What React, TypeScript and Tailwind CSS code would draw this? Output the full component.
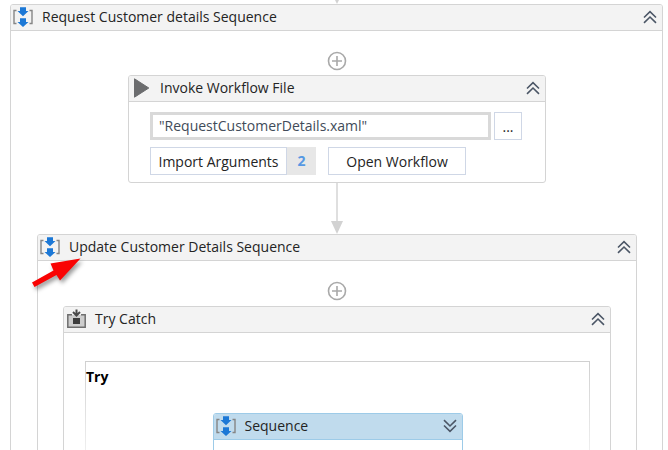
import { useState, type ReactNode } from "react";

function SequenceIcon() {
  return (
    <svg width="22" height="20" viewBox="0 0 22 20" fill="none" aria-hidden="true">
      <path d="M4.5 3.5H2v13h2.5M17.5 3.5H20v13h-2.5" stroke="#858585" strokeWidth="1.4" />
      <path d="M8 0.3h6v3.700h2.500L11 9.300 5.500 4H8z" fill="#1c78d6" />
      <path d="M8 11.200h6V15h2.500L11 20 5.500 15H8z" fill="#1c78d6" />
    </svg>
  );
}

function PlayIcon() {
  return (
    <svg width="22" height="20" viewBox="0 0 22 20" aria-hidden="true">
      <path d="M4.500 0.800L18.800 10 4.500 19.200z" fill="#6b6c6e" stroke="#6b6c6e" strokeLinejoin="round" />
    </svg>
  );
}

function TryCatchIcon() {
  return (
    <svg width="22" height="20" viewBox="0 0 22 20" fill="none" aria-hidden="true">
      <rect x="3" y="6" width="17" height="12" fill="#cdcdcd" />
      <path d="M6 0h11v5.500H6z" fill="#f3f3f3" />
      <path d="M7 5.700H2.800v12.500h17.400V5.700H16" stroke="#6e6e6e" strokeWidth="1.500" />
      <rect x="8" y="9" width="7" height="6" fill="#3c3c3c" />
      <path d="M11.500 0.500V6M8 3l3.500 3.500L15 3" stroke="#4a4a4a" strokeWidth="2" />
    </svg>
  );
}

function Chevrons({ down }: { down?: boolean }) {
  return (
    <svg
      className={down ? "rotate-180" : ""}
      width="14"
      height="14"
      viewBox="0 0 14 14"
      fill="none"
      stroke="#4b5666"
      strokeWidth="1.6"
      aria-hidden="true"
    >
      <path d="M1 7.500l6-5.800 6 5.800M1 12.800L7 7l6 5.800" />
    </svg>
  );
}

function AddButton() {
  return (
    <button type="button" aria-label="Add activity" className="mx-auto block size-5">
      <svg width="20" height="20" viewBox="0 0 20 20" fill="none" stroke="#a9a9a9" strokeWidth="1.6" aria-hidden="true">
        <circle cx="10" cy="10" r="8.500" />
        <path d="M10 5v10M5 10h10" />
      </svg>
    </button>
  );
}

function Connector() {
  return (
    <svg className="mx-auto block" width="12" height="51" viewBox="0 0 12 51" aria-hidden="true">
      <path d="M5.300 0h1.400v39H5.300z" fill="#d2d2d2" />
      <path d="M0 38h12L6 51z" fill="#d2d2d2" />
    </svg>
  );
}

type ActivityProps = {
  title: string;
  icon: ReactNode;
  selected?: boolean;
  startCollapsed?: boolean;
  className?: string;
  children?: ReactNode;
};

function Activity({ title, icon, selected, startCollapsed = false, className = "", children }: ActivityProps) {
  const [collapsed, setCollapsed] = useState(startCollapsed);
  const line = selected ? "border-[#9dcbe8]" : "border-[#d4d4d4]";
  const fill = selected ? "bg-[#c0dbed]" : "bg-[#f3f3f3]";
  return (
    <section className={`rounded-[3px] border bg-white ${line} ${className}`}>
      <header className={`flex h-[26px] items-center rounded-t-[2px] border-b pr-1 pb-px pl-px ${line} ${fill}`}>
        {icon}
        <h2 className="ml-2 flex-1 pb-px text-sm leading-5">{title}</h2>
        <button
          type="button"
          aria-label={`${collapsed ? "Expand" : "Collapse"} ${title}`}
          aria-expanded={!collapsed}
          onClick={() => setCollapsed(!collapsed)}
          className="grid size-4 place-items-center"
        >
          <Chevrons down={collapsed} />
        </button>
      </header>
      {collapsed ? <div className="h-10" /> : children}
    </section>
  );
}

const buttonStyle = "h-7 border border-[#cfd7e6] bg-white pt-px text-sm leading-5";

function InvokeWorkflow() {
  return (
    <Activity title="Invoke Workflow File" icon={<PlayIcon />} className="mx-auto w-[418px] max-w-full">
      <div className="flex flex-col gap-[7px] pt-[10px] pr-[23px] pb-[7px] pl-[21px]">
        <div className="flex gap-[3px]">
          <input
            aria-label="Workflow file name"
            defaultValue={'"RequestCustomerDetails.xaml"'}
            className="h-7 min-w-0 flex-1 border-3 border-[#d9d9d9] bg-white px-[6px] pb-0.5 text-sm leading-5 text-[#414b59] outline-none"
          />
          <button type="button" aria-label="Browse for a file" className={`w-7 ${buttonStyle}`}>
            ...
          </button>
        </div>
        <div className="flex">
          <button type="button" className={`w-[137px] ${buttonStyle}`}>
            Import Arguments
          </button>
          <span className="grid h-7 w-[29px] place-items-center bg-[#e7e7e7] text-sm font-bold text-[#5698e3]">2</span>
          <button type="button" className={`ml-3 w-[138px] ${buttonStyle}`}>
            Open Workflow
          </button>
        </div>
      </div>
    </Activity>
  );
}

function Pointer() {
  return (
    <svg
      className="pointer-events-none absolute top-6 -left-1.5 overflow-visible drop-shadow-[2px_3px_2px_rgba(0,0,0,0.4)]"
      width="50"
      height="30"
      viewBox="0 0 50 30"
      aria-hidden="true"
    >
      <path d="M1 24.500L22.500 12.500 19.500 5.500 49.500 0.500 29 22.500 25.500 17 3.500 29z" fill="#f90303" />
    </svg>
  );
}

export default function App() {
  return (
    <main className="h-screen overflow-hidden bg-white pr-[5px] pl-[10px] font-['Open_Sans','Noto_Sans',sans-serif] text-[#242424]">
      <svg className="mx-auto block" width="8" height="4" viewBox="0 0 8 4" aria-hidden="true">
        <path d="M2 0h4L4 4z" fill="#d2d2d2" />
      </svg>
      <Activity title="Request Customer details Sequence" icon={<SequenceIcon />}>
        <div className="pt-5 pr-[25px] pb-10 pl-[26px]">
          <AddButton />
          <div className="h-1" />
          <InvokeWorkflow />
          <Connector />
          <div className="relative">
            <Activity title="Update Customer Details Sequence" icon={<SequenceIcon />}>
              <div className="px-[25px] pt-5 pb-10">
                <AddButton />
                <div className="h-[5px]" />
                <Activity title="Try Catch" icon={<TryCatchIcon />}>
                  <div className="pt-7 pr-5 pb-10 pl-[21px]">
                    <div className="bg-linear-to-b from-[#d0d0d0] to-white p-px">
                      <div className="bg-white pb-4">
                        <h3 className="pt-[5px] text-sm leading-5 font-bold text-black">Try</h3>
                        <Activity
                          title="Sequence"
                          icon={<SequenceIcon />}
                          selected
                          startCollapsed
                          className="mx-auto mt-[26px] w-[250px] max-w-full"
                        />
                      </div>
                    </div>
                  </div>
                </Activity>
              </div>
            </Activity>
            <Pointer />
          </div>
        </div>
      </Activity>
    </main>
  );
}
